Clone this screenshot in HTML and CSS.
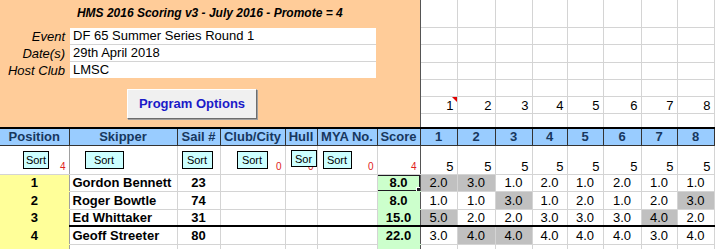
FILE: index.html
```html
<!DOCTYPE html>
<html>
  <head>
    <title>HMS 2016 Scoring</title>
    <link rel="stylesheet" href="styles.css">
  </head>
  <body>
    <table class="sheet">
      <colgroup>
        <col class="c-pos"><col class="c-skip"><col class="c-sail"><col class="c-club"><col class="c-hull"><col class="c-mya"><col class="c-score">
        <col class="c-37"><col class="c-38"><col class="c-37"><col class="c-35"><col class="c-36"><col class="c-38"><col class="c-36"><col class="c-37">
      </colgroup>
      <tbody>
        <tr class="r1">
          <td class="panel" colspan="7" rowspan="7">
            <div class="panel-title">HMS 2016 Scoring v3 - July 2016 - Promote = 4</div>
            <div class="event">
              <div class="ev-label">Event</div><div class="ev-value">DF 65 Summer Series Round 1</div>
              <div class="ev-label">Date(s)</div><div class="ev-value">29th April 2018</div>
              <div class="ev-label">Host Club</div><div class="ev-value last">LMSC</div>
            </div>
            <div class="panel-actions"><div class="prog-btn">Program Options</div></div>
          </td>
          <td class="blank"></td><td class="blank"></td><td class="blank"></td><td class="blank"></td><td class="blank"></td><td class="blank"></td><td class="blank"></td><td class="blank"></td>
        </tr>
        <tr class="r2"><td class="blank"></td><td class="blank"></td><td class="blank"></td><td class="blank"></td><td class="blank"></td><td class="blank"></td><td class="blank"></td><td class="blank"></td></tr>
        <tr class="r3"><td class="blank"></td><td class="blank"></td><td class="blank"></td><td class="blank"></td><td class="blank"></td><td class="blank"></td><td class="blank"></td><td class="blank"></td></tr>
        <tr class="r4"><td class="blank"></td><td class="blank"></td><td class="blank"></td><td class="blank"></td><td class="blank"></td><td class="blank"></td><td class="blank"></td><td class="blank"></td></tr>
        <tr class="r5"><td class="blank"></td><td class="blank"></td><td class="blank"></td><td class="blank"></td><td class="blank"></td><td class="blank"></td><td class="blank"></td><td class="blank"></td></tr>
        <tr class="r6">
          <td class="blank num note">1</td><td class="blank num">2</td><td class="blank num">3</td><td class="blank num">4</td><td class="blank num">5</td><td class="blank num">6</td><td class="blank num">7</td><td class="blank num">8</td>
        </tr>
        <tr class="r7"><td class="blank"></td><td class="blank"></td><td class="blank"></td><td class="blank"></td><td class="blank"></td><td class="blank"></td><td class="blank"></td><td class="blank"></td></tr>

        <tr class="r-head">
          <td class="hd first">Position</td><td class="hd">Skipper</td><td class="hd">Sail #</td><td class="hd">Club/City</td><td class="hd">Hull</td><td class="hd">MYA No.</td><td class="hd">Score</td>
          <td class="hd">1</td><td class="hd">2</td><td class="hd">3</td><td class="hd">4</td><td class="hd">5</td><td class="hd">6</td><td class="hd">7</td><td class="hd">8</td>
        </tr>

        <tr class="r-sort">
          <td class="pos-edge"><div class="sort-cell"><span class="sort-btn sb-pos">Sort</span><span class="count">4</span></div></td>
          <td><div class="sort-cell"><span class="sort-btn sb-skip">Sort</span></div></td>
          <td><div class="sort-cell"><span class="sort-btn sb-sail">Sort</span></div></td>
          <td><div class="sort-cell"><span class="sort-btn sb-club">Sort</span><span class="count">0</span></div></td>
          <td><div class="sort-cell"><span class="sort-btn sb-hull">Sor</span><span class="count">0</span></div></td>
          <td><div class="sort-cell"><span class="sort-btn sb-mya">Sort</span><span class="count">0</span></div></td>
          <td class="score-edge"><div class="sort-cell"><span class="count">4</span></div></td>
          <td class="race-count">5</td><td class="race-count">5</td><td class="race-count">5</td><td class="race-count">5</td><td class="race-count">5</td><td class="race-count">5</td><td class="race-count">5</td><td class="race-count">5</td>
        </tr>

        <tr class="r-data">
          <td class="pos">1</td><td class="skip">Gordon Bennett</td><td class="sail">23</td><td></td><td></td><td></td><td class="score sel">8.0</td>
          <td class="race drop">2.0</td><td class="race drop">3.0</td><td class="race">1.0</td><td class="race">2.0</td><td class="race">1.0</td><td class="race">2.0</td><td class="race">1.0</td><td class="race">1.0</td>
        </tr>
        <tr class="r-data tall">
          <td class="pos">2</td><td class="skip">Roger Bowtle</td><td class="sail">74</td><td></td><td></td><td></td><td class="score">8.0</td>
          <td class="race">1.0</td><td class="race">1.0</td><td class="race drop">3.0</td><td class="race">1.0</td><td class="race">2.0</td><td class="race">1.0</td><td class="race">2.0</td><td class="race drop">3.0</td>
        </tr>
        <tr class="r-data">
          <td class="pos">3</td><td class="skip">Ed Whittaker</td><td class="sail">31</td><td></td><td></td><td></td><td class="score">15.0</td>
          <td class="race drop">5.0</td><td class="race">2.0</td><td class="race">2.0</td><td class="race">3.0</td><td class="race">3.0</td><td class="race">3.0</td><td class="race drop">4.0</td><td class="race">2.0</td>
        </tr>
        <tr class="r-data tall promote">
          <td class="pos">4</td><td class="skip">Geoff Streeter</td><td class="sail">80</td><td></td><td></td><td></td><td class="score">22.0</td>
          <td class="race">3.0</td><td class="race drop">4.0</td><td class="race drop">4.0</td><td class="race">4.0</td><td class="race">4.0</td><td class="race">4.0</td><td class="race">3.0</td><td class="race">4.0</td>
        </tr>
        <tr class="r-data">
          <td class="pos"></td><td></td><td></td><td></td><td></td><td></td><td class="score"></td>
          <td></td><td></td><td></td><td></td><td></td><td></td><td></td><td></td>
        </tr>
      </tbody>
    </table>
  </body>
</html>
```

FILE: styles.css
```css
body {
  margin: 0;
  background: #fff;
  font-family: "Liberation Sans", Arial, sans-serif;
  font-size: 13px;
  color: #000;
}
.sheet {
  border-collapse: collapse;
  table-layout: fixed;
  width: 714px;
}
.sheet td {
  padding: 0;
  border: 1px solid #d4d4d4;
  overflow: hidden;
  white-space: nowrap;
  line-height: 15px;
}
.c-pos { width: 69px; }
.c-skip { width: 108px; }
.c-sail { width: 43px; }
.c-club { width: 65px; }
.c-hull { width: 32px; }
.c-mya { width: 60px; }
.c-score { width: 43px; }
.c-35 { width: 35px; }
.c-36 { width: 36px; }
.c-37 { width: 37px; }
.c-38 { width: 38px; }

.r1 { height: 27px; }
.r2 { height: 17px; }
.r3 { height: 18px; }
.r4 { height: 17px; }
.r5 { height: 17px; }
.r6 { height: 17px; }
.r7 { height: 15px; }
.r-head { height: 17px; }
.r-sort { height: 29px; }
.r-data { height: 17px; }
.r-data.tall { height: 18px; }

.r1 td { border-top: none; }

/* top panel */
.sheet td.panel {
  background: #ffcc99;
  vertical-align: top;
  border-left: none;
  border-top: none;
  border-right: 1px solid #555;
}
.panel-title {
  height: 27px;
  line-height: 26px;
  text-align: center;
  font-size: 12px;
  font-weight: bold;
  font-style: italic;
}
.event {
  display: grid;
  grid-template-columns: 70px 306px;
  margin-top: 1px;
}
.ev-label {
  height: 17px;
  line-height: 17px;
  text-align: right;
  padding-right: 5px;
  font-style: italic;
}
.ev-value {
  height: 16px;
  line-height: 16px;
  padding-left: 3px;
  background: #fff;
  border-bottom: 1px solid #d4d4d4;
}
.ev-value.last {
  border-bottom: none;
}
.panel-actions {
  padding: 10px 0 0 127px;
}
.prog-btn {
  width: 128px;
  height: 28px;
  line-height: 28px;
  text-align: center;
  background: #f0f0f0;
  border: 1px solid;
  border-color: #fff #6d6d6d #6d6d6d #fff;
  box-shadow: 1px 1px 0 #a0a0a0;
  color: #1a1ac8;
  font-weight: bold;
}

.num {
  text-align: right;
  padding-right: 3px !important;
  vertical-align: bottom;
}
.note {
  position: relative;
}
.note::after {
  content: "";
  position: absolute;
  top: 0;
  right: 0;
  border-top: 5px solid #e00000;
  border-left: 5px solid transparent;
}
.r7 td {
  border-bottom: 2px solid #000;
}

/* header */
.sheet td.hd {
  background: #99ccff;
  color: #17375e;
  font-weight: bold;
  text-align: center;
  border: 1px solid #333;
  border-top: 2px solid #000;
}
.sheet td.hd.first {
  border-left: none;
}

/* sort row */
.sort-cell {
  display: flex;
  height: 28px;
  align-items: flex-start;
}
.sort-btn {
  margin-top: 5px;
  height: 18px;
  box-sizing: border-box;
  border: 1px solid #000;
  background: #ccffff;
  font-size: 11px;
  line-height: 16px;
  text-align: center;
  z-index: 1;
}
.sb-pos { margin-left: 23px; width: 26px; }
.sb-skip { margin-left: 15px; width: 39px; }
.sb-sail { margin-left: 4px; width: 31px; }
.sb-club { margin-left: 16px; width: 31px; }
.sb-hull { margin-left: 5px; width: 26px; margin-top: 4px; height: 17px; margin-right: -12px; }
.sb-mya { margin-left: 5px; width: 29px; }
.count {
  margin-left: auto;
  align-self: flex-end;
  padding-right: 3px;
  margin-bottom: 2px;
  color: #e02020;
  font-size: 10px;
  line-height: 10px;
}
.sheet td.pos-edge {
  border-left: none;
  border-right: 1px solid #a0a0a0;
}
.sheet td.score-edge {
  border-right: 1px solid #555;
}
.race-count {
  text-align: right;
  vertical-align: bottom;
  padding-right: 3px !important;
}

/* data rows */
.sheet td.pos {
  background: #ffff99;
  font-weight: bold;
  text-align: center;
  border-left: none;
  border-top-color: #ffff99;
  border-bottom-color: #ffff99;
  border-right: 1px solid #a0a0a0;
}
.skip {
  font-weight: bold;
  padding-left: 3px !important;
}
.sail {
  font-weight: bold;
  text-align: center;
}
.sheet td.score {
  background: #ccffcc;
  font-weight: bold;
  text-align: center;
  border-top-color: #ccffcc;
  border-bottom-color: #ccffcc;
  border-right: 1px solid #555;
}
.race {
  text-align: center;
}
.drop {
  background: #c0c0c0;
}
.sel {
  position: relative;
}
.sel::before {
  content: "";
  position: absolute;
  top: -1px;
  left: -2px;
  right: -1px;
  bottom: -1px;
  border: 2px solid #1e1a22;
}
.sel::after {
  content: "";
  position: absolute;
  right: -3px;
  bottom: -3px;
  width: 5px;
  height: 5px;
  background: #1e1a22;
  border: 1px solid #fff;
  z-index: 2;
}
.sheet .promote td {
  border-top: 2px solid #000;
}
.sheet .promote td.pos {
  border-top: 1px solid #ffff99;
}
```
